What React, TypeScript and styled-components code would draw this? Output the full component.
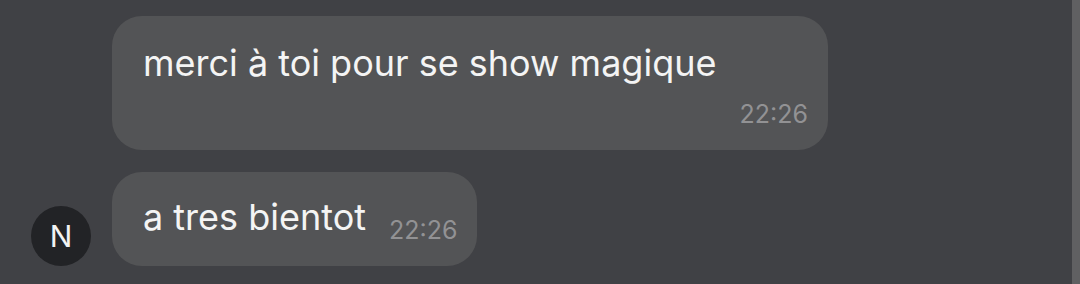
import React from 'react';
import styled, { createGlobalStyle } from 'styled-components';

const GlobalStyle = createGlobalStyle`
  html, body {
    margin: 0;
    padding: 0;
    background: #404145;
  }
  body {
    font-family: "Inter", "Noto Sans", sans-serif;
  }
`;

const Screen = styled.div`
  display: flex;
  width: 1080px;
  height: 284px;
  background: #404145;
  overflow: hidden;
`;

const Feed = styled.div`
  flex: 1;
  display: flex;
  flex-direction: column;
  gap: 22px;
  padding: 16px 0 0 31px;
`;

const Row = styled.div`
  display: flex;
  align-items: flex-end;
  gap: 21px;
`;

const AvatarSlot = styled.div`
  width: 60px;
  height: 60px;
  flex-shrink: 0;
`;

const Avatar = styled.div`
  width: 60px;
  height: 60px;
  border-radius: 50%;
  background: #222326;
  color: #f2f2f2;
  display: flex;
  align-items: center;
  justify-content: center;
  font-size: 30px;
  font-weight: 400;
`;

const Bubble = styled.div<{ stacked?: boolean }>`
  background: #535456;
  border-radius: 30px;
  color: #f4f4f4;
  display: flex;
  align-items: flex-start;
  gap: 23px;
  padding: ${({ stacked }) => (stacked ? '25px 20px 21px 31px' : '23px 20px 21px 31px')};
`;

const Text = styled.div`
  font-size: 36px;
  line-height: 44px;
`;

const Time = styled.div<{ stacked?: boolean }>`
  margin-top: ${({ stacked }) => (stacked ? '58px' : '20px')};
  font-size: 25px;
  line-height: 30px;
  color: #929294;
`;

const Scrollbar = styled.div`
  width: 8px;
  background: #606062;
`;

const messages = [
  { text: 'merci à toi pour se show magique', time: '22:26', stacked: true, avatar: false },
  { text: 'a tres bientot', time: '22:26', stacked: false, avatar: true },
];

export default function App() {
  return (
    <Screen>
      <GlobalStyle />
      <Feed>
        {messages.map((m, i) => (
          <Row key={i}>
            {m.avatar ? <Avatar>N</Avatar> : <AvatarSlot />}
            <Bubble stacked={m.stacked}>
              <Text>{m.text}</Text>
              <Time stacked={m.stacked}>{m.time}</Time>
            </Bubble>
          </Row>
        ))}
      </Feed>
      <Scrollbar />
    </Screen>
  );
}
